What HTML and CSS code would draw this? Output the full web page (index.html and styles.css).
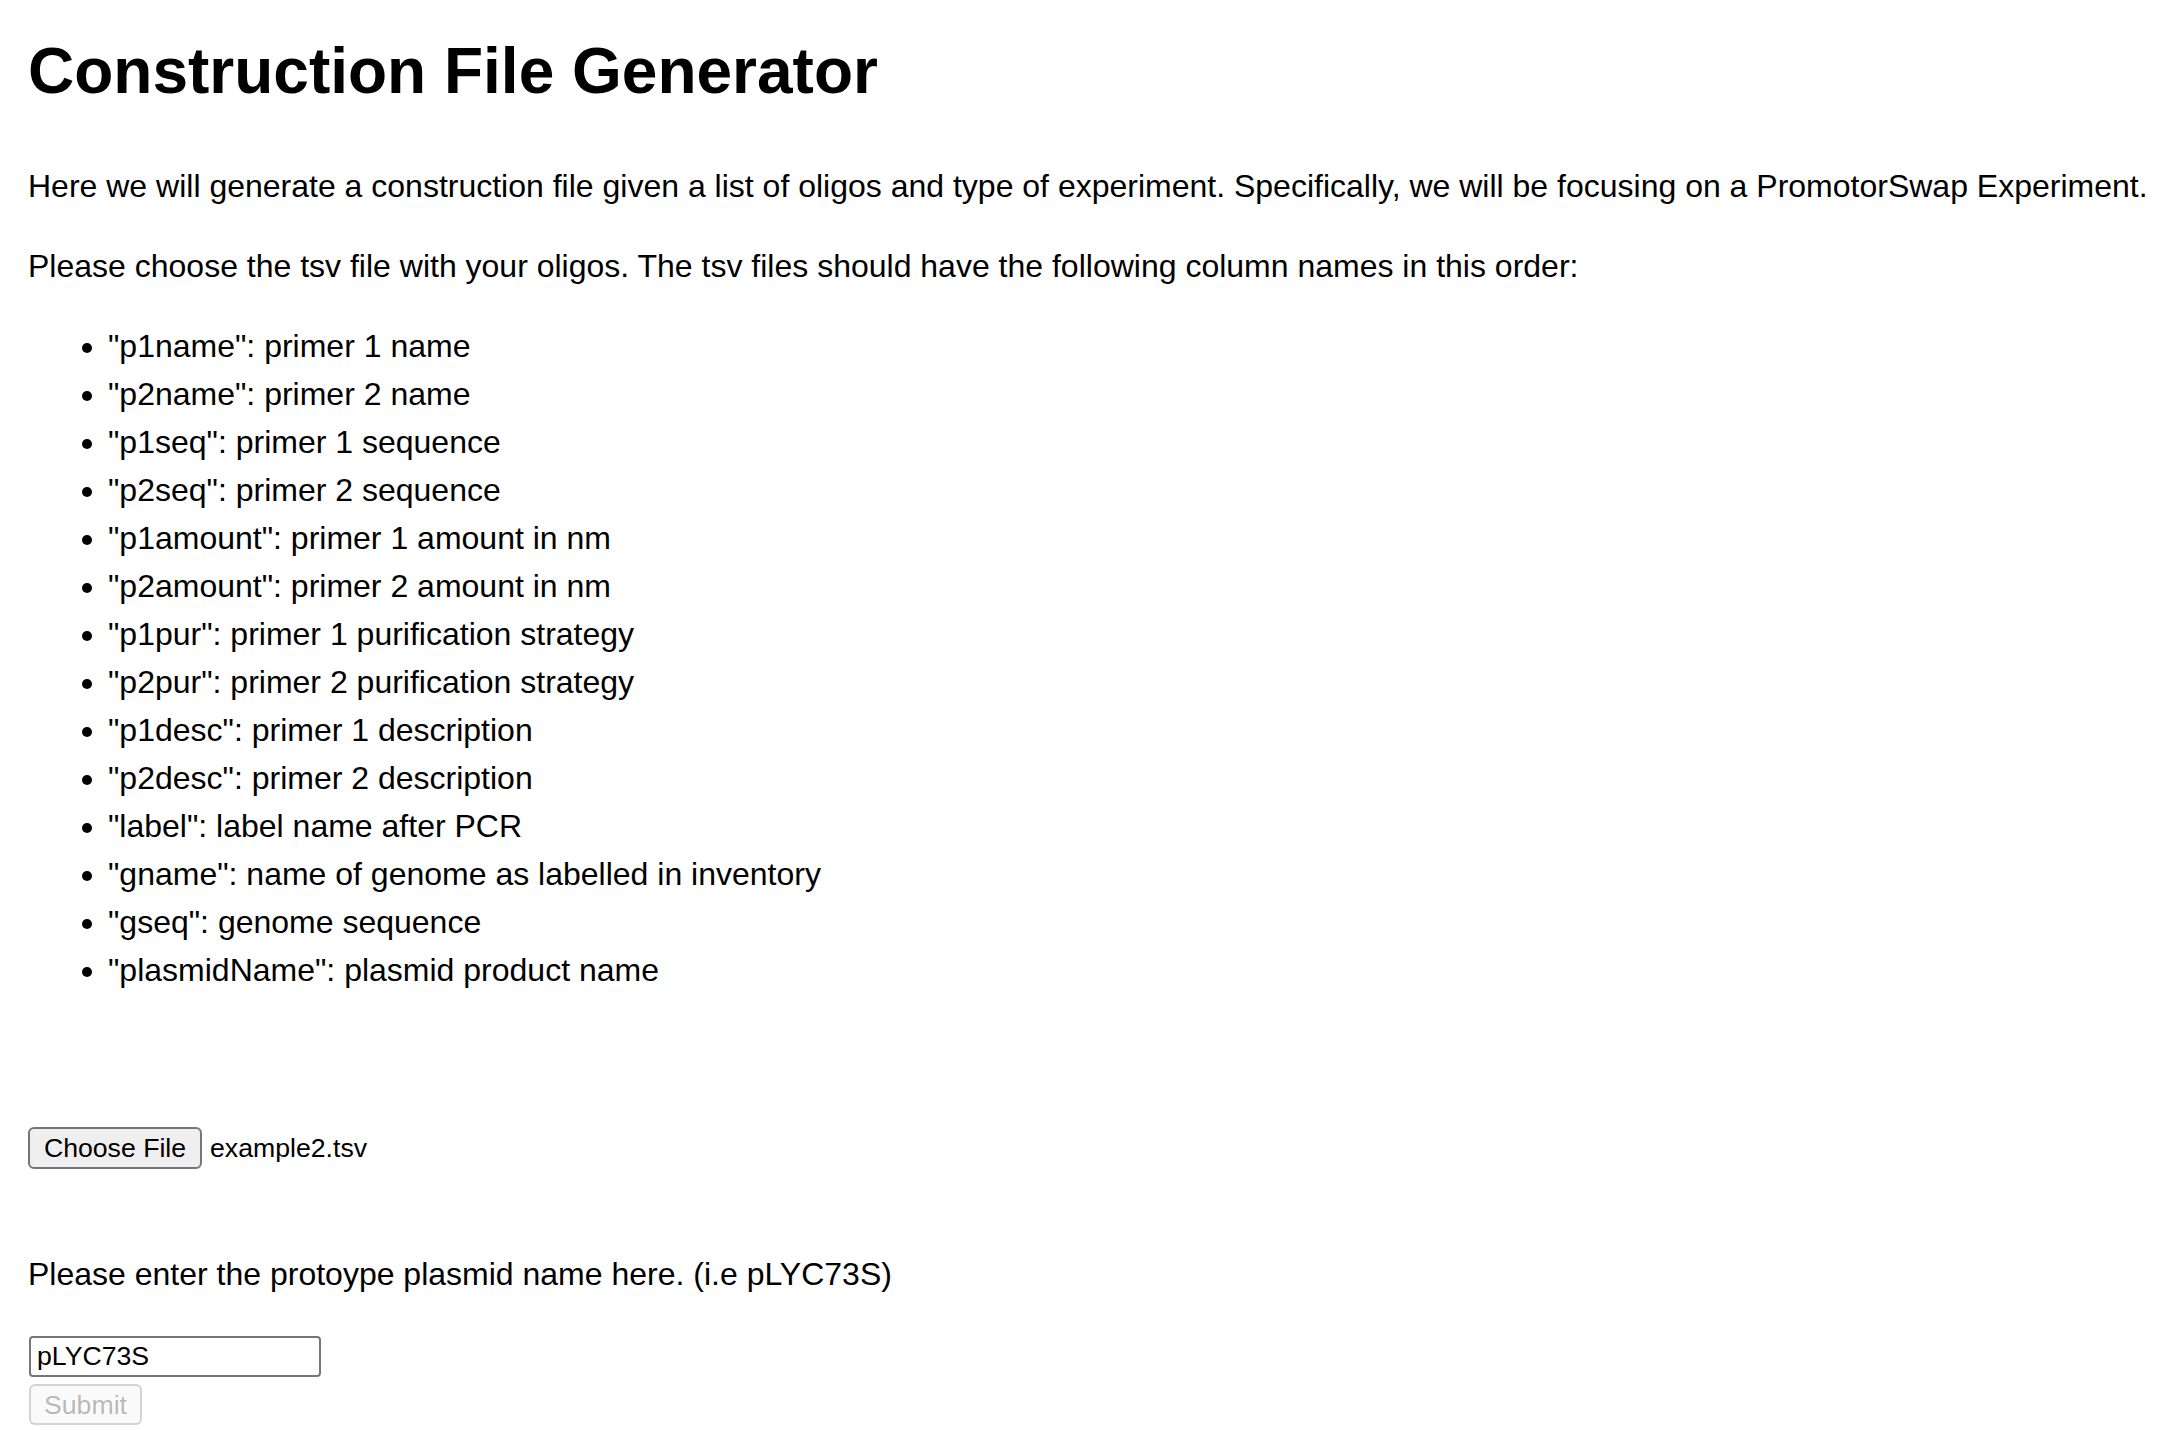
FILE: index.html
```html
<!DOCTYPE html>
<html lang="en">
<head>
<meta charset="utf-8">
<title>Construction File Generator</title>
<link rel="stylesheet" href="styles.css">
</head>
<body>
<h1 class="title">Construction File Generator</h1>
<p class="text">Here we will generate a construction file given a list of oligos and type of experiment. Specifically, we will be focusing on a PromotorSwap Experiment.</p>
<p class="text">Please choose the tsv file with your oligos. The tsv files should have the following column names in this order:</p>
<ul class="columns">
  <li>"p1name": primer 1 name</li>
  <li>"p2name": primer 2 name</li>
  <li>"p1seq": primer 1 sequence</li>
  <li>"p2seq": primer 2 sequence</li>
  <li>"p1amount": primer 1 amount in nm</li>
  <li>"p2amount": primer 2 amount in nm</li>
  <li>"p1pur": primer 1 purification strategy</li>
  <li>"p2pur": primer 2 purification strategy</li>
  <li>"p1desc": primer 1 description</li>
  <li>"p2desc": primer 2 description</li>
  <li>"label": label name after PCR</li>
  <li>"gname": name of genome as labelled in inventory</li>
  <li>"gseq": genome sequence</li>
  <li>"plasmidName": plasmid product name</li>
</ul>
<div class="upload">
  <button class="btn choose" type="button">Choose File</button>
  <span class="filename">example2.tsv</span>
</div>
<p class="text prompt">Please enter the protoype plasmid name here. (i.e pLYC73S)</p>
<form class="plasmid-form">
  <input class="field" type="text" value="pLYC73S">
  <button class="btn submit" type="button" disabled>Submit</button>
</form>
</body>
</html>
```
FILE: styles.css
```css
html, body {
  background: #ffffff;
}
body {
  margin: 0;
  padding: 0 0 0 28px;
  font-family: "Liberation Sans", Arial, Helvetica, sans-serif;
  font-size: 32px;
  line-height: 48px;
  color: #000000;
}
.title {
  font-size: 64px;
  line-height: 64px;
  font-weight: bold;
  margin: 39px 0 0 0;
}
.text {
  margin: 59px 0 32px 0;
  white-space: nowrap;
}
.text + .text {
  margin-top: 32px;
}
.columns {
  margin: 32px 0 0 0;
  padding-left: 80px;
}
.upload {
  margin-top: 133px;
  display: flex;
  align-items: center;
  gap: 8px;
  font-size: 26.67px;
  line-height: 32px;
}
.btn {
  font-family: "Liberation Sans", Arial, Helvetica, sans-serif;
  font-size: 26.67px;
  line-height: 32px;
  box-sizing: border-box;
  height: 42px;
  margin: 0;
  border: 2px solid #767676;
  border-radius: 6px;
  background: #efefef;
  color: #000000;
  padding: 0;
  white-space: nowrap;
  text-align: center;
}
.choose {
  width: 174px;
}
.prompt {
  margin-top: 81px;
  margin-bottom: 38px;
}
.plasmid-form {
  margin: 0;
  display: flex;
  flex-direction: column;
  align-items: flex-start;
  gap: 7px;
}
.field {
  box-sizing: border-box;
  width: 292px;
  height: 41px;
  margin: 0 0 0 1px;
  padding: 0 6px;
  font-family: "Liberation Sans", Arial, Helvetica, sans-serif;
  font-size: 26.67px;
  color: #000000;
  border: 2px solid #767676;
  border-radius: 4px;
  background: #ffffff;
}
.submit {
  width: 113px;
  height: 41px;
  margin-left: 1px;
  color: rgba(16, 16, 16, 0.3);
  background: rgba(239, 239, 239, 0.3);
  border-color: rgba(118, 118, 118, 0.3);
}
```
